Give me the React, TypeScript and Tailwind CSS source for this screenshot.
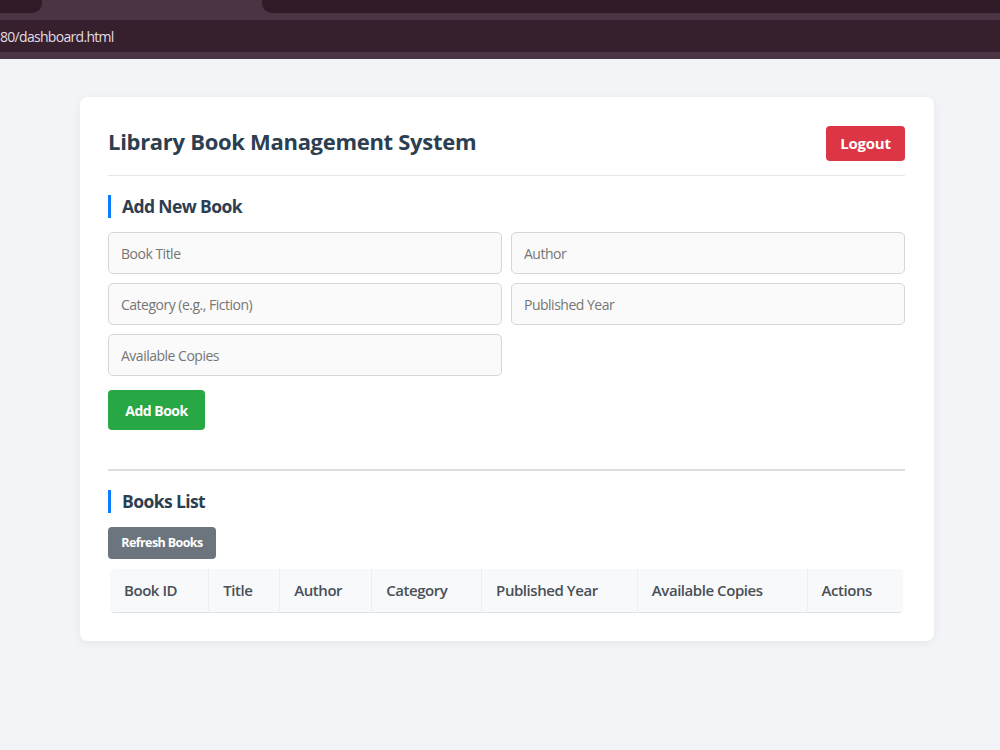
import React from "react";

const COLUMNS = ["Book ID", "Title", "Author", "Category", "Published Year", "Available Copies", "Actions"];
const COL_WIDTHS = ["w-[99px]", "w-[71px]", "w-[92px]", "w-[110px]", "w-[156px]", "w-[170px]", "w-[96px]"];

function BrowserChrome() {
  return (
    <div className="bg-[#4b3443]">
      {/* tab row */}
      <div className="flex h-[13px] bg-[#4b3443]">
        <div className="w-[42px] rounded-br-[10px] bg-[#2e1b27]" />
        <div className="w-[220px]" />
        <div className="flex-1 rounded-bl-[10px] bg-[#2e1b27]" />
      </div>
      <div className="h-[7px]" />
      {/* address bar */}
      <div className="flex h-[32px] items-center bg-[#36202d] text-[14px] tracking-[-0.7px] text-[#e4dce1]">
        80/dashboard.html
      </div>
      <div className="h-[7px]" />
    </div>
  );
}

function SectionTitle({ children }: { children: React.ReactNode }) {
  return (
    <h2 className="flex h-[23px] items-center border-l-[3px] border-[#0d7bff] pl-[11px] text-[17.5px] font-bold tracking-[-0.6px] text-[#2c3e50]">
      {children}
    </h2>
  );
}

function Field({ placeholder }: { placeholder: string }) {
  return (
    <input
      type="text"
      placeholder={placeholder}
      className="h-[42px] w-full rounded-[5px] border border-[#d6d6d6] bg-[#fafafa] px-[12px] text-[14px] tracking-[-0.5px] text-[#333] outline-none placeholder:text-[#767676]"
    />
  );
}

export default function App() {
  return (
    <div
      className="min-h-[750px] bg-[#f3f4f7]"
      style={{ fontFamily: '"Segoe UI", "Open Sans", "Noto Sans", sans-serif' }}
    >
      <BrowserChrome />

      <div className="pt-[38px] pb-[100px]">
        <div className="ml-[80px] w-[854px] rounded-[8px] bg-white pl-[28px] pr-[29px] pt-[26px] pb-[28px] shadow-[0_2px_10px_rgba(0,0,0,0.06)]">
          {/* header */}
          <div className="flex items-center justify-between border-b border-[#e4e6ea] pb-[14px]">
            <h1 className="-mt-[1px] text-[22px] font-bold tracking-[-0.3px] text-[#2c3e50]">Library Book Management System</h1>
            <button
              type="button"
              className="mt-[3px] h-[35px] w-[79px] rounded-[4px] bg-[#dc3545] text-[15px] font-bold tracking-[-0.2px] text-white"
            >
              Logout
            </button>
          </div>

          {/* add book */}
          <div className="mt-[19px]">
            <SectionTitle>Add New Book</SectionTitle>
            <div className="mt-[14px] grid grid-cols-2 gap-x-[9px] gap-y-[9px]">
              <Field placeholder="Book Title" />
              <Field placeholder="Author" />
              <Field placeholder="Category (e.g., Fiction)" />
              <Field placeholder="Published Year" />
              <Field placeholder="Available Copies" />
            </div>
            <button
              type="button"
              className="mt-[14px] h-[40px] w-[97px] rounded-[4px] bg-[#28a745] text-[14px] font-bold tracking-[-0.5px] text-white"
            >
              Add Book
            </button>
          </div>

          <div className="mt-[39px] border-t-2 border-[#dedede]" />

          {/* books list */}
          <div className="mt-[19px]">
            <SectionTitle>Books List</SectionTitle>
            <button
              type="button"
              className="mt-[14px] h-[32px] w-[108px] rounded-[4px] bg-[#6c757d] text-[12.5px] font-bold tracking-[-0.6px] text-white"
            >
              Refresh Books
            </button>
            <div className="mt-[10px] px-[2px]">
              <table className="w-full border-collapse overflow-hidden rounded-[4px]">
                <thead>
                  <tr className="h-[43px] border-b border-[#dee2e6] bg-[#f8f9fa]">
                    {COLUMNS.map((c, i) => (
                      <th
                        key={c}
                        className={`${COL_WIDTHS[i]} border-r border-[#eceef0] px-[14px] text-left text-[15px] font-semibold tracking-[-0.45px] text-[#495057] last:border-r-0`}
                      >
                        {c}
                      </th>
                    ))}
                  </tr>
                </thead>
                <tbody />
              </table>
            </div>
          </div>
        </div>
      </div>
    </div>
  );
}
